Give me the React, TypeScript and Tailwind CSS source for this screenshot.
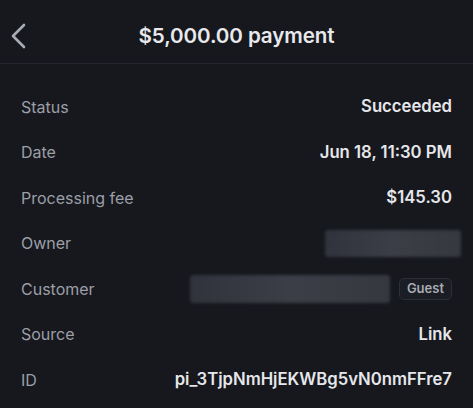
import React from 'react';

interface Row {
  label: string;
  value?: string;
  kind?: 'text' | 'owner' | 'customer';
}

const rows: Row[] = [
  { label: 'Status', value: 'Succeeded' },
  { label: 'Date', value: 'Jun 18, 11:30 PM' },
  { label: 'Processing fee', value: '$145.30' },
  { label: 'Owner', kind: 'owner' },
  { label: 'Customer', kind: 'customer' },
  { label: 'Source', value: 'Link' },
  { label: 'ID', value: 'pi_3TjpNmHjEKWBg5vN0nmFFre7' },
];

function Redacted({ className }: { className: string }) {
  return (
    <div className={`rounded-[3px] bg-gradient-to-r from-[#30333b] via-[#3b3e46] to-[#35383f] blur-[1.5px] ${className}`} />
  );
}

export default function App() {
  return (
    <div
      className="w-[473px] h-[408px] overflow-hidden bg-[#16181e] text-[#e6e7ea]"
      style={{ fontFamily: 'Inter, "Noto Sans", sans-serif' }}
    >
      {/* Header */}
      <div className="relative h-16 pt-[10px] flex items-center justify-center border-b border-[#23262d]">
        <svg
          className="absolute left-[10px] top-[23px]"
          width="18"
          height="26"
          viewBox="0 0 18 26"
          fill="none"
          stroke="#a9acb4"
          strokeWidth="2.6"
          strokeLinecap="round"
          strokeLinejoin="round"
        >
          <path d="M14 2 L3 13 L14 24" />
        </svg>
        <h1 className="text-[20.6px] font-semibold tracking-[-0.1px] text-[#e8e9ec]">$5,000.00 payment</h1>
      </div>

      {/* Details */}
      <div className="pt-5 px-[21px]">
        {rows.map((row) => (
          <div key={row.label} className="h-[45.5px] flex items-center justify-between">
            <span className="text-[16px] text-[#9c9fa7]">{row.label}</span>
            {row.kind === 'owner' && <Redacted className="w-[136px] h-[27px] mr-[-9px]" />}
            {row.kind === 'customer' && (
              <div className="flex items-center gap-[9px]">
                <Redacted className="w-[200px] h-[28px]" />
                <span className="px-[7px] h-[22px] flex items-center rounded-[5px] border border-[#2c2f37] bg-[#1b1d24] text-[13px] font-semibold text-[#a9acb4]">
                  Guest
                </span>
              </div>
            )}
            {!row.kind && <span className="text-[16.7px] font-semibold text-[#e6e7ea]">{row.value}</span>}
          </div>
        ))}
      </div>
    </div>
  );
}
